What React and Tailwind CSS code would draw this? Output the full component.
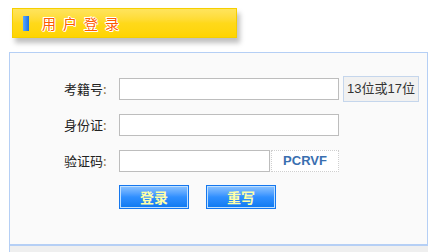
import React from "react";

const cjk = "font-['Noto_Sans_CJK_SC','Noto_Sans',sans-serif]";

const Field = ({ label, children }) => (
  <div className="flex items-center h-[36px]">
    <span className="w-[55px] text-[13px] text-[#222]">
      {label}
      <span className="text-[#8a6d3b]">:</span>
    </span>
    {children}
  </div>
);

export default function App() {
  return (
    <div className={`w-[435px] h-[252px] bg-white overflow-hidden ${cjk}`}>
      {/* title bar */}
      <div className="pt-[8px] pl-[12px]">
        <div className="w-[225px] h-[30px] flex items-center border border-[#f5cf00] bg-gradient-to-b from-[#ffe45c] via-[#ffd91a] to-[#ffd400] shadow-[3px_5px_5px_rgba(0,0,0,0.25)]">
          <span className="ml-[10px] w-[6px] h-[15px] bg-gradient-to-r from-[#5aa8ff] to-[#1a6fe0]" />
          <span className="ml-[13px] text-[14px] leading-none tracking-[7px] text-[#ff5a00] [text-shadow:1px_0_0_#fff,-1px_0_0_#fff,0_1px_0_#fff,0_-1px_0_#fff,1px_1px_0_#fff,-1px_-1px_0_#fff]">
            用户登录
          </span>
        </div>
      </div>

      {/* panel */}
      <div className="mt-[14px] ml-[9px] w-[419px] h-[194px] border border-b-2 border-[#b5cff5] bg-[#fafafa] pt-[18px] pl-[54px]">
        <Field label="考籍号">
          <div className="w-[220px] h-[22px] border border-[#bdbdbd] bg-white" />
          <div className="ml-[4px] w-[76px] h-[26px] flex items-center justify-center border border-[#c5d6ec] bg-[#f1f1f1] text-[13px] text-[#333] font-['Liberation_Sans','Noto_Sans_CJK_SC',sans-serif]">
            13位或17位
          </div>
        </Field>
        <Field label="身份证">
          <div className="w-[220px] h-[22px] border border-[#bdbdbd] bg-white" />
        </Field>
        <Field label="验证码">
          <div className="w-[151px] h-[22px] border border-[#bdbdbd] bg-white" />
          <div className="ml-[1px] w-[68px] h-[22px] flex items-center justify-center border border-dotted border-[#cfcfcf] bg-white text-[13px] font-bold text-[#3a6fb0] font-['Liberation_Sans',sans-serif]">
            PCRVF
          </div>
        </Field>
        <div className="mt-[6px] ml-[55px] flex gap-[17px]">
          {["登录", "重写"].map((t) => (
            <button
              key={t}
              className="w-[70px] h-[24px] border border-[#1577ee] shadow-[inset_0_0_0_1px_#bfe0ff] bg-gradient-to-b from-[#8dc4ff] via-[#2f8fff] to-[#0a78f0] text-[14px] font-bold text-[#ffffa8] leading-none"
            >
              {t}
            </button>
          ))}
        </div>
      </div>
      <div className="ml-[9px] w-[419px] h-[10px] border-l border-[#b5cff5] bg-[#efefef]" />
    </div>
  );
}
